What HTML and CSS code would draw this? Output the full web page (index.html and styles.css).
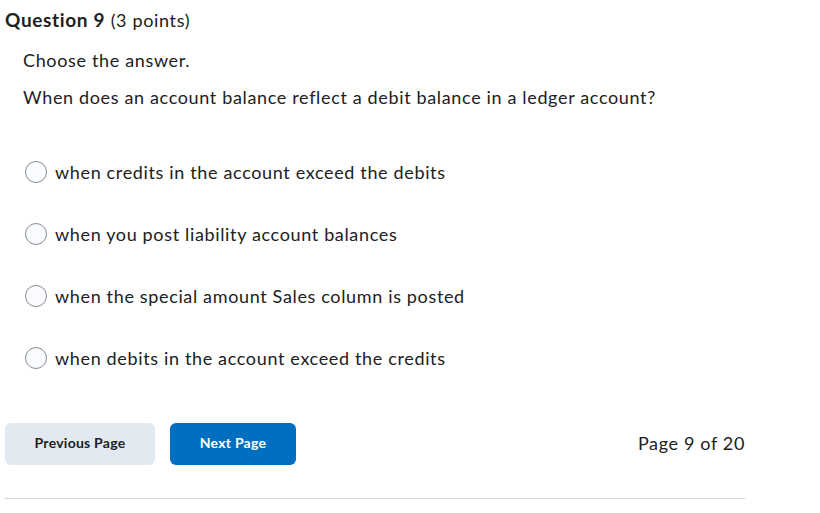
FILE: index.html
```html
<!DOCTYPE html>
<html>
<head>
<meta charset="utf-8">
<link rel="stylesheet" href="styles.css">
</head>
<body>
<div class="page">
  <h2 class="qtitle"><strong>Question 9</strong> <span class="pts">(3 points)</span></h2>
  <div class="body">
    <p class="instr">Choose the answer.</p>
    <p class="stem">When does an account balance reflect a debit balance in a ledger account?</p>
    <div class="options">
      <label class="opt"><span class="radio"></span><span>when credits in the account exceed the debits</span></label>
      <label class="opt"><span class="radio"></span><span>when you post liability account balances</span></label>
      <label class="opt"><span class="radio"></span><span>when the special amount Sales column is posted</span></label>
      <label class="opt"><span class="radio"></span><span>when debits in the account exceed the credits</span></label>
    </div>
  </div>
  <div class="nav">
    <button class="btn prev">Previous Page</button>
    <button class="btn next">Next Page</button>
    <span class="pageinfo">Page 9 of 20</span>
  </div>
  <hr class="rule">
</div>
</body>
</html>
```
FILE: styles.css
```css
html, body { margin: 0; padding: 0; background: #fff; }
body { font-family: Lato, "Open Sans", sans-serif; color: #202122; letter-spacing: 0.65px; }
.page { width: 740px; padding-left: 5px; }
.qtitle { margin: 0; padding-top: 8px; font-size: 19px; font-weight: 400; line-height: 24px; }
.qtitle strong { font-weight: 700; }
.pts { font-size: 18px; }
.body { padding-left: 18px; }
.instr { margin: 16px 0 0; font-size: 18px; line-height: 24px; }
.stem { margin: 13px 0 0; font-size: 18px; line-height: 24px; }
.options { display: flex; flex-direction: column; gap: 38px; margin-top: 51px; }
.opt { display: flex; align-items: center; gap: 8px; font-size: 18px; line-height: 24px; }
.radio { width: 20px; height: 20px; border: 1.5px solid #868c8f; border-radius: 50%; background: #f9fbff; margin-left: 2px; box-sizing: content-box; }
.nav { display: flex; align-items: center; gap: 15px; margin-top: 53px; }
.btn { font-family: Lato, sans-serif; font-weight: 700; font-size: 14px; letter-spacing: 0.25px; height: 42px; line-height: 40px; border: none; border-radius: 6px; padding: 0 0 2px; }
.prev { width: 150px; background: #e3e9f1; color: #202122; }
.next { width: 126px; background: #006fbf; color: #fff; }
.pageinfo { margin-left: auto; font-size: 18px; line-height: 24px; padding-bottom: 3px; }
.rule { margin: 33px 0 0; border: none; border-top: 1px solid #cdd5dc; }
```
